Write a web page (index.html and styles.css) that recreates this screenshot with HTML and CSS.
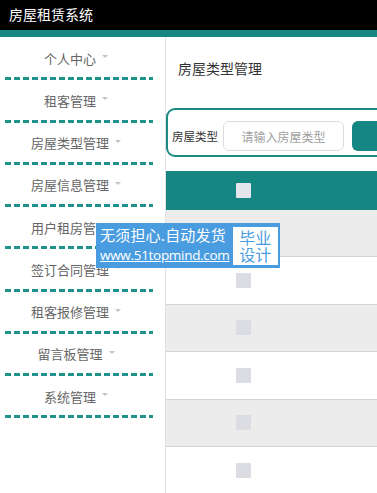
FILE: index.html
```html
<!DOCTYPE html>
<html lang="zh-CN">
<head>
<meta charset="utf-8">
<title>房屋租赁系统</title>
<link rel="stylesheet" href="styles.css">
</head>
<body>
<header class="topbar">
  <span class="brand">房屋租赁系统</span>
</header>
<div class="layout">
  <aside class="sidebar">
    <ul class="menu">
      <li class="menu-item"><span class="menu-label">个人中心</span><i class="caret"></i></li>
      <li class="menu-item"><span class="menu-label">租客管理</span><i class="caret"></i></li>
      <li class="menu-item"><span class="menu-label">房屋类型管理</span><i class="caret"></i></li>
      <li class="menu-item"><span class="menu-label">房屋信息管理</span><i class="caret"></i></li>
      <li class="menu-item"><span class="menu-label">用户租房管理</span><i class="caret"></i></li>
      <li class="menu-item"><span class="menu-label">签订合同管理</span><i class="caret"></i></li>
      <li class="menu-item"><span class="menu-label">租客报修管理</span><i class="caret"></i></li>
      <li class="menu-item"><span class="menu-label">留言板管理</span><i class="caret"></i></li>
      <li class="menu-item"><span class="menu-label">系统管理</span><i class="caret"></i></li>
    </ul>
  </aside>
  <main class="main">
    <h1 class="page-title">房屋类型管理</h1>
    <form class="search">
      <label class="search-label">房屋类型</label>
      <input class="search-input" type="text" placeholder="请输入房屋类型">
      <button class="search-btn" type="button" aria-label="查询"></button>
    </form>
    <div class="table">
      <div class="row head"><span class="check"></span></div>
      <div class="row odd"><span class="check"></span></div>
      <div class="row"><span class="check"></span></div>
      <div class="row odd"><span class="check"></span></div>
      <div class="row"><span class="check"></span></div>
      <div class="row odd"><span class="check"></span></div>
      <div class="row"><span class="check"></span></div>
    </div>
  </main>
</div>
<div class="promo">
  <div class="promo-text">
    <span class="promo-line1">无须担心.自动发货</span>
    <span class="promo-line2">www.51topmind.com</span>
  </div>
  <div class="promo-tag">毕业<br>设计</div>
</div>
</body>
</html>
```
FILE: styles.css
```css
* { box-sizing: border-box; }
html, body { margin: 0; padding: 0; }
body {
  font-family: "Noto Sans CJK SC", "Noto Sans", sans-serif;
  background: #fff;
  color: #333;
  width: 377px;
  height: 493px;
  overflow: hidden;
  position: relative;
}
.topbar {
  height: 37px;
  background: #000;
  border-bottom: 7px solid #158681;
  padding-left: 9px;
  display: flex;
  align-items: center;
}
.brand {
  color: #fff;
  font-size: 14px;
  line-height: 20px;
  margin-top: -3px;
}
.layout {
  display: flex;
  height: 456px;
}
.sidebar {
  width: 166px;
  flex: none;
  border-right: 1px solid #e2e2e2;
  padding-top: 1px;
}
.menu {
  list-style: none;
  margin: 0;
  padding: 0;
}
.menu-item {
  margin-left: 5px;
  width: 148px;
  padding: 9px 6px 10.25px 0;
  line-height: 20px;
  height: 42.25px;
  display: flex;
  justify-content: center;
  align-items: center;
  gap: 6px;
  font-size: 13px;
  color: #666;
  background-image: repeating-linear-gradient(to right, #1f928b 0 6px, transparent 6px 9px);
  background-size: 100% 3px;
  background-position: left bottom;
  background-repeat: no-repeat;
}
.caret {
  width: 0;
  height: 0;
  border-left: 3px solid transparent;
  border-right: 3px solid transparent;
  border-top: 3px solid #c4c4c4;
  margin-top: -4px;
}
.main {
  flex: 1;
  min-width: 0;
}
.page-title {
  margin: 0;
  padding: 21px 0 0 12px;
  font-size: 14px;
  font-weight: normal;
  line-height: 20px;
  color: #333;
}
.search {
  margin: 30px 0 0 0;
  height: 49px;
  width: 240px;
  border: 2px solid #1b8a84;
  border-radius: 9px;
  display: flex;
  align-items: center;
  padding: 7px 0 0 4px;
  gap: 5px;
}
.search-label {
  font-size: 11.5px;
  color: #333;
  white-space: nowrap;
  width: 48px;
}
.search-input {
  width: 121px;
  height: 30px;
  border: 1px solid #dcdcdc;
  border-radius: 6px;
  font-family: inherit;
  font-size: 12px;
  text-align: center;
  color: #333;
  padding: 0;
}
.search-input::placeholder { color: #a0a0a0; }
.search-btn {
  margin-left: 3px;
  width: 60px;
  height: 30px;
  flex: none;
  border: none;
  border-radius: 6px;
  background: #158681;
}
.table {
  margin-top: 14px;
}
.row {
  height: 47.5px;
  border-bottom: 1px solid #d4d4d4;
  display: flex;
  align-items: center;
  padding-left: 70px;
  background: #fff;
}
.row.head {
  height: 38.5px;
  background: #158681;
  border-bottom: none;
}
.row.odd { background: #ececec; }
.check {
  width: 15px;
  height: 15px;
  background: #dcdde2;
  border-radius: 1px;
}
.row.head .check { background: #e4e6ec; }
.promo {
  position: absolute;
  left: 96px;
  top: 223px;
  width: 184px;
  height: 45px;
  background: #4a9ce0;
  display: flex;
  align-items: center;
  padding: 0 2px 0 4px;
  gap: 3px;
}
.promo-text {
  display: flex;
  flex-direction: column;
  color: #fff;
  line-height: 21px;
  margin-top: -1px;
}
.promo-line1 {
  font-size: 15px;
  white-space: nowrap;
  letter-spacing: 0.2px;
}
.promo-line2 {
  font-family: "Open Sans", "Noto Sans", sans-serif;
  font-size: 13.5px;
  text-decoration: underline;
  white-space: nowrap;
  letter-spacing: -0.3px;
}
.promo-tag {
  margin-left: auto;
  width: 48px;
  height: 38px;
  background: #fff;
  color: #4a9ce0;
  font-size: 16px;
  line-height: 17px;
  text-align: center;
  padding-top: 2px;
}
```
